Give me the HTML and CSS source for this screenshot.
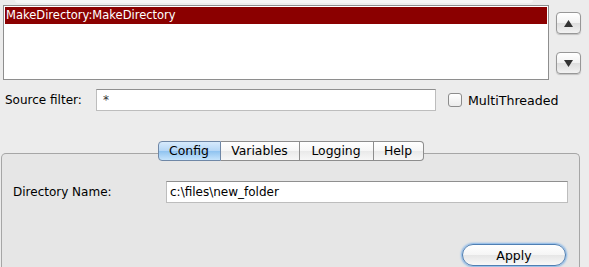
FILE: index.html
```html
<!DOCTYPE html>
<html>
<head>
    <title>MakeDirectory</title>
    <link rel="stylesheet" href="styles.css">
</head>
<body>
    <div class="top-strip"></div>

    <div class="list-row">
        <div class="task-list">
            <div class="task-item selected">MakeDirectory:MakeDirectory</div>
        </div>
        <div class="move-buttons">
            <button class="move-btn" title="Move up">
                <svg width="9" height="7" viewBox="0 0 9 7"><polygon points="4.5,0 9,7 0,7" fill="#333"/></svg>
            </button>
            <button class="move-btn" title="Move down">
                <svg width="9" height="7" viewBox="0 0 9 7"><polygon points="0,0 9,0 4.5,7" fill="#333"/></svg>
            </button>
        </div>
    </div>

    <div class="filter-row">
        <label class="filter-label">Source filter:</label>
        <input type="text" class="text-field filter-field" value="*">
        <span class="checkbox"></span>
        <span class="check-label">MultiThreaded</span>
    </div>

    <div class="tab-bar">
        <div class="tab active">Config</div>
        <div class="tab">Variables</div>
        <div class="tab">Logging</div>
        <div class="tab">Help</div>
    </div>

    <div class="tab-panel">
        <div class="field-row">
            <label class="field-label">Directory Name:</label>
            <input type="text" class="text-field dir-field" value="c:\files\new_folder">
        </div>
        <div class="actions">
            <button class="apply-btn">Apply</button>
        </div>
    </div>
</body>
</html>
```

FILE: styles.css
```css
body {
    font-family: "DejaVu Sans", Verdana, sans-serif;
    font-size: 12px;
    color: #000;
    margin: 0;
    background-color: #ececec;
    overflow: hidden;
}

.top-strip {
    height: 3px;
    margin: 0 56px 0 15px;
    background-color: #f5f5f5;
    border-radius: 0 0 4px 4px;
}

/* list of tasks + up/down */
.list-row {
    display: flex;
    margin-top: 2px;
    padding-left: 3px;
}

.task-list {
    box-sizing: border-box;
    width: 546px;
    height: 75px;
    padding: 1px;
    background: white;
    border: 1px solid #8e8e8e;
}

.task-item {
    height: 17px;
    line-height: 17px;
    padding-left: 1px;
    font-size: 11.5px;
}

.task-item.selected {
    background-color: #8b0000;
    color: white;
}

.move-buttons {
    display: flex;
    flex-direction: column;
    gap: 18px;
    margin-left: 7px;
    padding-top: 7px;
}

.move-btn {
    box-sizing: border-box;
    width: 25px;
    height: 22px;
    padding: 0;
    display: flex;
    align-items: center;
    justify-content: center;
    border: 1px solid #979797;
    border-radius: 4px;
    background: linear-gradient(#ffffff, #f2f2f2 50%, #dedede 52%, #f2f2f2);
    box-shadow: 0 1px 1px rgba(0,0,0,0.18);
}

/* source filter row */
.filter-row {
    display: flex;
    align-items: center;
    margin-top: 9px;
    padding-left: 5px;
}

.filter-label {
    width: 91px;
}

.text-field {
    box-sizing: border-box;
    height: 22px;
    margin: 0;
    padding: 0 0 0 6px;
    font-family: inherit;
    font-size: 12px;
    color: #000;
    background: white;
    border: 1px solid #bdbdbd;
    border-top-color: #8f8f8f;
    outline: none;
}

.filter-field {
    width: 340px;
    color: #333;
}

.checkbox {
    box-sizing: border-box;
    width: 14px;
    height: 14px;
    margin-left: 12px;
    border: 1px solid #8c8c8c;
    border-radius: 3px;
    background: linear-gradient(#ffffff, #ececec);
}

.check-label {
    margin-left: 6px;
    font-size: 12.6px;
}

/* tabs */
.tab-bar {
    position: relative;
    z-index: 1;
    display: flex;
    justify-content: center;
    margin: 30px 9px 0 1px;
    height: 20px;
}

.tab {
    box-sizing: border-box;
    height: 20px;
    line-height: 18px;
    text-align: center;
    font-size: 12.4px;
    border: 1px solid #8d8d8d;
    border-left: none;
    background: linear-gradient(#ffffff, #f6f6f6 50%, #e9e9e9 51%, #f7f7f7);
}

.tab:nth-child(1) { width: 63px; border-left: 1px solid #7d8ea3; border-radius: 4px 0 0 4px; }
.tab:nth-child(2) { width: 79px; }
.tab:nth-child(3) { width: 74px; }
.tab:nth-child(4) { width: 50px; border-radius: 0 4px 4px 0; }

.tab.active {
    border-color: #6f87a6;
    background: linear-gradient(#d7eafc, #b4d6f6 50%, #8fc3f0 51%, #c6e4fc);
}

.tab-panel {
    box-sizing: border-box;
    height: 122px;
    margin: -8px 9px 0 1px;
    padding: 27px 11px 0 11px;
    background-color: #e6e6e6;
    border: 1px solid #a6a6a6;
    border-bottom: none;
    border-radius: 5px 5px 0 0;
}

.field-row {
    display: flex;
    align-items: center;
}

.field-label {
    width: 153px;
}

.dir-field {
    width: 402px;
    padding-left: 3px;
}

.actions {
    display: flex;
    justify-content: flex-end;
    margin-top: 41px;
    padding-right: 2px;
}

.apply-btn {
    box-sizing: border-box;
    width: 104px;
    height: 22px;
    padding: 0;
    font-family: inherit;
    font-size: 12.5px;
    color: #000;
    border: 1px solid #4f7fb3;
    border-radius: 11px;
    background: linear-gradient(#ffffff, #f5f5f5 50%, #e6e6e6 51%, #f8f8f8);
    box-shadow: 0 0 2px 1px #82b4e8;
}
```
